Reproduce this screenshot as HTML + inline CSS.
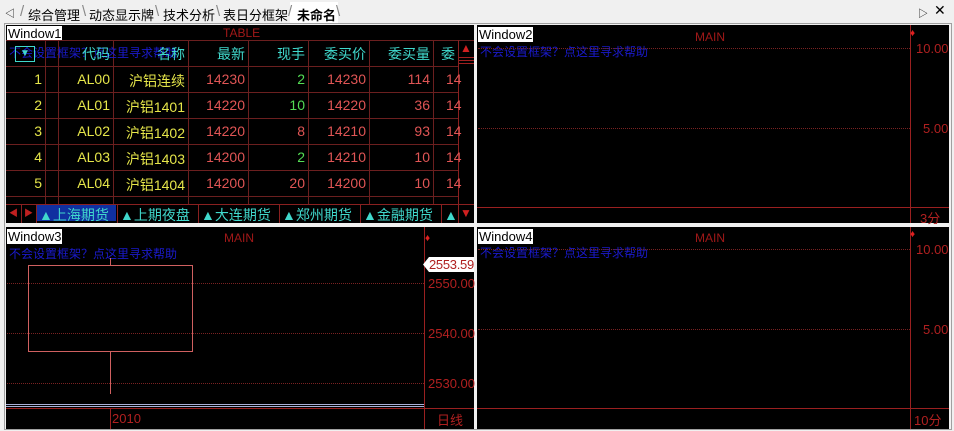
<!DOCTYPE html><html><head><meta charset="utf-8"><style>
*{margin:0;padding:0;box-sizing:border-box}
body{width:954px;height:431px;background:#f0f0f0;position:relative;overflow:hidden;font-family:"Liberation Sans","Noto Sans CJK SC",sans-serif;font-size:13px}
.a{position:absolute;white-space:nowrap}
.blk{position:absolute;background:#000}
.vl{position:absolute;width:1px;background:#6b1f1f}
.hl{position:absolute;height:1px;background:#6b1f1f}
.dot{position:absolute;height:0;border-top:1px dotted #7a2222}
.wt{position:absolute;background:#fff;color:#000;font-size:13px;line-height:15px;padding:0 1px}
.help{position:absolute;color:#1a1acc;font-size:12px}
.main{position:absolute;color:#a01818;font-size:12px}
.ax{position:absolute;color:#b02020;font-size:12px}
.c{position:absolute;font-size:14px;text-align:right}
.y{color:#e6e64a}.r{color:#e05555}.g{color:#55dd55}.h{color:#40d8cc}
</style></head><body>
<!-- tab bar -->
<div class="a" style="left:5px;top:5px;font-size:10px">&#9665;</div>
<div class="a" style="left:290px;top:2px;width:48px;height:21px;background:#fff"></div>
<div class="a" style="left:28px;top:5px">综合管理</div>
<div class="a" style="left:89px;top:5px">动态显示牌</div>
<div class="a" style="left:163px;top:5px">技术分析</div>
<div class="a" style="left:223px;top:5px">表日分框架</div>
<div class="a" style="left:297px;top:5px;font-weight:bold">未命名</div>
<div class="a" style="left:20px;top:3px;color:#888;font-size:15px">/</div>
<div class="a" style="left:82px;top:3px;color:#888;font-size:15px">\</div>
<div class="a" style="left:155px;top:3px;color:#888;font-size:15px">\</div>
<div class="a" style="left:216px;top:3px;color:#888;font-size:15px">\</div>
<div class="a" style="left:288px;top:3px;color:#888;font-size:15px">/</div>
<div class="a" style="left:336px;top:3px;color:#888;font-size:15px">\</div>
<div class="a" style="left:918px;top:5px;font-size:10px">&#9655;</div>
<div class="a" style="left:934px;top:2px;font-size:14px">&#10005;</div>
<div class="a" style="left:4px;top:23px;width:948px;height:407px;border:1px solid #a0a0a0"></div>

<!-- Window1 -->
<div class="blk" style="left:6px;top:25px;width:468px;height:198px"></div>
<div class="wt" style="left:7px;top:26px">Window1</div>
<div class="main" style="left:223px;top:26px">TABLE</div>
<div class="hl" style="left:6px;top:40px;width:468px"></div>
<div class="hl" style="left:6px;top:66px;width:452px"></div>
<div class="hl" style="left:6px;top:92px;width:452px"></div>
<div class="hl" style="left:6px;top:118px;width:452px"></div>
<div class="hl" style="left:6px;top:144px;width:452px"></div>
<div class="hl" style="left:6px;top:170px;width:452px"></div>
<div class="hl" style="left:6px;top:196px;width:452px"></div>
<div class="hl" style="left:6px;top:204px;width:468px;background:#8a2020"></div>
<div class="vl" style="left:45px;top:40px;height:164px"></div>
<div class="vl" style="left:58px;top:40px;height:164px"></div>
<div class="vl" style="left:113px;top:40px;height:164px"></div>
<div class="vl" style="left:188px;top:40px;height:164px"></div>
<div class="vl" style="left:248px;top:40px;height:164px"></div>
<div class="vl" style="left:308px;top:40px;height:164px"></div>
<div class="vl" style="left:369px;top:40px;height:164px"></div>
<div class="vl" style="left:433px;top:40px;height:164px"></div>
<div class="vl" style="left:458px;top:40px;height:183px;background:#8a2020"></div>
<div class="help" style="left:9px;top:44px">不会设置框架？点这里寻求帮助</div>
<div class="a" style="left:15px;top:46px;width:20px;height:16px;border:1px solid #40d8cc;color:#40d8cc;font-size:10px;text-align:center;line-height:14px">&#9660;</div>
<div class="c h" style="left:60px;top:44px;width:50px">代码</div>
<div class="c h" style="left:115px;top:44px;width:70px">名称</div>
<div class="c h" style="left:190px;top:44px;width:55px">最新</div>
<div class="c h" style="left:250px;top:44px;width:55px">现手</div>
<div class="c h" style="left:310px;top:44px;width:56px">委买价</div>
<div class="c h" style="left:371px;top:44px;width:59px">委买量</div>
<div class="a h" style="left:441px;top:44px;font-size:14px">委</div>
<!-- rows -->
<div class="c y" style="left:8px;top:71px;width:34px">1</div><div class="c y" style="left:60px;top:71px;width:50px">AL00</div><div class="c y" style="left:115px;top:71px;width:70px">沪铝连续</div><div class="c r" style="left:190px;top:71px;width:55px">14230</div><div class="c g" style="left:250px;top:71px;width:55px">2</div><div class="c r" style="left:310px;top:71px;width:56px">14230</div><div class="c r" style="left:371px;top:71px;width:59px">114</div><div class="a r" style="left:446px;top:71px;font-size:14px">14</div>
<div class="c y" style="left:8px;top:97px;width:34px">2</div><div class="c y" style="left:60px;top:97px;width:50px">AL01</div><div class="c y" style="left:115px;top:97px;width:70px">沪铝1401</div><div class="c r" style="left:190px;top:97px;width:55px">14220</div><div class="c g" style="left:250px;top:97px;width:55px">10</div><div class="c r" style="left:310px;top:97px;width:56px">14220</div><div class="c r" style="left:371px;top:97px;width:59px">36</div><div class="a r" style="left:446px;top:97px;font-size:14px">14</div>
<div class="c y" style="left:8px;top:123px;width:34px">3</div><div class="c y" style="left:60px;top:123px;width:50px">AL02</div><div class="c y" style="left:115px;top:123px;width:70px">沪铝1402</div><div class="c r" style="left:190px;top:123px;width:55px">14220</div><div class="c r" style="left:250px;top:123px;width:55px">8</div><div class="c r" style="left:310px;top:123px;width:56px">14210</div><div class="c r" style="left:371px;top:123px;width:59px">93</div><div class="a r" style="left:446px;top:123px;font-size:14px">14</div>
<div class="c y" style="left:8px;top:149px;width:34px">4</div><div class="c y" style="left:60px;top:149px;width:50px">AL03</div><div class="c y" style="left:115px;top:149px;width:70px">沪铝1403</div><div class="c r" style="left:190px;top:149px;width:55px">14200</div><div class="c g" style="left:250px;top:149px;width:55px">2</div><div class="c r" style="left:310px;top:149px;width:56px">14210</div><div class="c r" style="left:371px;top:149px;width:59px">10</div><div class="a r" style="left:446px;top:149px;font-size:14px">14</div>
<div class="c y" style="left:8px;top:175px;width:34px">5</div><div class="c y" style="left:60px;top:175px;width:50px">AL04</div><div class="c y" style="left:115px;top:175px;width:70px">沪铝1404</div><div class="c r" style="left:190px;top:175px;width:55px">14200</div><div class="c r" style="left:250px;top:175px;width:55px">20</div><div class="c r" style="left:310px;top:175px;width:56px">14200</div><div class="c r" style="left:371px;top:175px;width:59px">10</div><div class="a r" style="left:446px;top:175px;font-size:14px">14</div>
<!-- scrollbar -->
<div class="a" style="left:460px;top:41px;color:#d02020;font-size:12px">&#9650;</div>
<div class="hl" style="left:459px;top:57px;width:15px;background:#a02020"></div>
<div class="hl" style="left:459px;top:60px;width:15px;background:#a02020"></div>
<div class="hl" style="left:459px;top:63px;width:15px;background:#a02020"></div>
<div class="a" style="left:460px;top:206px;color:#d02020;font-size:12px">&#9660;</div>
<!-- bottom tabs -->
<div class="a" style="left:9px;top:206px;color:#c02020;font-size:9px">&#9664;</div>
<div class="a" style="left:24px;top:206px;color:#c02020;font-size:9px">&#9654;</div>
<div class="a" style="left:37px;top:205px;width:79px;height:16px;background:#1030a0"></div>
<div class="vl" style="left:21px;top:204px;height:19px;background:#8a2020"></div>
<div class="vl" style="left:36px;top:204px;height:19px;background:#8a2020"></div>
<div class="vl" style="left:117px;top:204px;height:19px;background:#8a2020"></div>
<div class="vl" style="left:198px;top:204px;height:19px;background:#8a2020"></div>
<div class="vl" style="left:279px;top:204px;height:19px;background:#8a2020"></div>
<div class="vl" style="left:360px;top:204px;height:19px;background:#8a2020"></div>
<div class="vl" style="left:441px;top:204px;height:19px;background:#8a2020"></div>
<div class="a h" style="left:39px;top:205px;font-size:14px">▲上海期货</div>
<div class="a h" style="left:120px;top:205px;font-size:14px">▲上期夜盘</div>
<div class="a h" style="left:201px;top:205px;font-size:14px">▲大连期货</div>
<div class="a h" style="left:282px;top:205px;font-size:14px">▲郑州期货</div>
<div class="a h" style="left:363px;top:205px;font-size:14px">▲金融期货</div>
<div class="a h" style="left:444px;top:205px;font-size:14px;width:13px;overflow:hidden">▲上</div>

<!-- Window2 -->
<div class="blk" style="left:477px;top:25px;width:472px;height:198px"></div>
<div class="wt" style="left:478px;top:27px">Window2</div>
<div class="main" style="left:695px;top:30px">MAIN</div>
<div class="help" style="left:480px;top:43px">不会设置框架？点这里寻求帮助</div>
<div class="dot" style="left:478px;top:48px;width:432px"></div>
<div class="dot" style="left:478px;top:128px;width:432px"></div>
<div class="vl" style="left:910px;top:25px;height:198px;background:#9a2020"></div>
<div class="hl" style="left:477px;top:207px;width:472px;background:#9a2020"></div>
<div class="a" style="left:910px;top:28px;color:#e02020;font-size:10px">&#9830;</div>
<div class="ax" style="left:916px;top:41px;font-size:13px">10.00</div>
<div class="ax" style="left:923px;top:121px;font-size:13px">5.00</div>
<div class="ax" style="left:920px;top:208px;font-size:13px">3分</div>

<!-- Window3 -->
<div class="blk" style="left:6px;top:227px;width:468px;height:202px"></div>
<div class="wt" style="left:7px;top:229px">Window3</div>
<div class="main" style="left:224px;top:231px">MAIN</div>
<div class="help" style="left:9px;top:245px">不会设置框架？点这里寻求帮助</div>
<div class="dot" style="left:7px;top:283px;width:417px"></div>
<div class="dot" style="left:7px;top:333px;width:417px"></div>
<div class="dot" style="left:7px;top:383px;width:417px"></div>
<div class="vl" style="left:424px;top:227px;height:202px;background:#9a2020"></div>
<div class="hl" style="left:6px;top:408px;width:468px;background:#9a2020"></div>
<div class="vl" style="left:110px;top:258px;height:8px;background:#d06060"></div>
<div class="a" style="left:28px;top:265px;width:165px;height:87px;border:1px solid #d06060"></div>
<div class="vl" style="left:110px;top:352px;height:42px;background:#d06060"></div>
<div class="vl" style="left:110px;top:408px;height:21px;background:#9a2020"></div>
<div class="a" style="left:6px;top:404px;width:418px;height:3px;border-top:1px solid #a8b0d8;border-bottom:1px solid #a8b0d8"></div>
<div class="a" style="left:425px;top:233px;color:#e02020;font-size:10px">&#9830;</div>
<svg class="a" style="left:423px;top:257px" width="51" height="15"><polygon points="0,7.5 6,0 51,0 51,15 6,15" fill="#fff"/></svg>
<div class="a" style="left:429px;top:257px;color:#b02020;font-size:13px;letter-spacing:-0.3px">2553.59</div>
<div class="ax" style="left:428px;top:276px;font-size:13px">2550.00</div>
<div class="ax" style="left:428px;top:326px;font-size:13px">2540.00</div>
<div class="ax" style="left:428px;top:376px;font-size:13px">2530.00</div>
<div class="ax" style="left:112px;top:411px;font-size:13px">2010</div>
<div class="ax" style="left:437px;top:410px;font-size:13px">日线</div>

<!-- Window4 -->
<div class="blk" style="left:477px;top:227px;width:472px;height:202px"></div>
<div class="wt" style="left:478px;top:229px">Window4</div>
<div class="main" style="left:695px;top:231px">MAIN</div>
<div class="help" style="left:480px;top:244px">不会设置框架？点这里寻求帮助</div>
<div class="dot" style="left:478px;top:249px;width:432px"></div>
<div class="dot" style="left:478px;top:329px;width:432px"></div>
<div class="vl" style="left:910px;top:227px;height:202px;background:#9a2020"></div>
<div class="hl" style="left:477px;top:408px;width:472px;background:#9a2020"></div>
<div class="a" style="left:910px;top:229px;color:#e02020;font-size:10px">&#9830;</div>
<div class="ax" style="left:916px;top:242px;font-size:13px">10.00</div>
<div class="ax" style="left:923px;top:322px;font-size:13px">5.00</div>
<div class="ax" style="left:914px;top:410px;font-size:13px">10分</div>
</body></html>
